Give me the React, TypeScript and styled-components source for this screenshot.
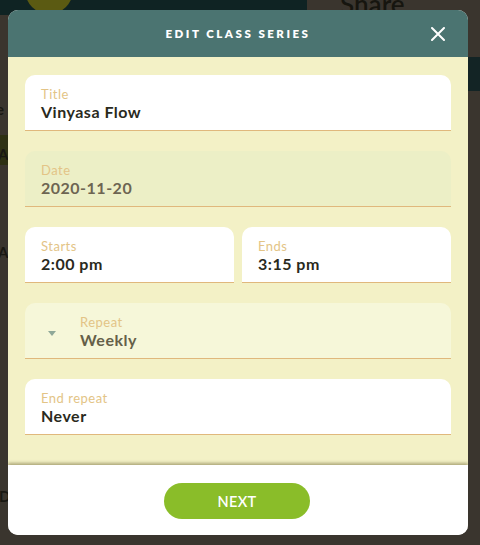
import React from "react";
import styled, { createGlobalStyle } from "styled-components";

const Global = createGlobalStyle`
  html, body { margin: 0; padding: 0; }
  body { width: 480px; height: 545px; overflow: hidden; font-family: "Lato", "Noto Sans", sans-serif; }
`;

const Page = styled.div`
  position: relative;
  width: 480px;
  height: 545px;
  background: #3a352e;
  overflow: hidden;
`;

const TopBar = styled.div`
  display: flex;
  height: 15px;
`;

const TopDark = styled.div`
  width: 307px;
  background: #0f2323;
  position: relative;
`;

const Avatar = styled.div`
  position: absolute;
  left: 25px;
  top: -34px;
  width: 48px;
  height: 48px;
  border-radius: 50%;
  background: #5b5a12;
`;

const ShareText = styled.div`
  position: absolute;
  left: 340px;
  top: -12px;
  font-size: 26px;
  font-weight: 600;
  color: #16150f;
  white-space: nowrap;
`;

const SideBlock = styled.div<{ $top: number; $h: number; $c: string; $left: number; $w: number }>`
  position: absolute;
  left: ${(p) => p.$left}px;
  top: ${(p) => p.$top}px;
  width: ${(p) => p.$w}px;
  height: ${(p) => p.$h}px;
  background: ${(p) => p.$c};
`;

const Modal = styled.div`
  position: absolute;
  left: 8px;
  top: 10px;
  width: 460px;
  border-radius: 10px;
  overflow: hidden;
  display: flex;
  flex-direction: column;
  background: #fff;
`;

const Header = styled.div`
  height: 47px;
  background: #4b7471;
  display: flex;
  align-items: center;
  justify-content: center;
  position: relative;
`;

const HeaderTitle = styled.h1`
  margin: 0;
  font-size: 11.5px;
  font-weight: 800;
  letter-spacing: 2.5px;
  color: #fff;
`;

const Close = styled.button`
  position: absolute;
  right: 22px;
  top: 16px;
  width: 16px;
  height: 16px;
  padding: 0;
  border: 0;
  background: none;
  display: flex;
  align-items: center;
  justify-content: center;
`;

const Body = styled.div`
  background: #f3f1c6;
  padding: 18px 17px 30px;
  display: flex;
  flex-direction: column;
  gap: 20px;
`;

const Row = styled.div`
  display: grid;
  grid-template-columns: 1fr 1fr;
  gap: 8px;
`;

const Field = styled.div<{ $bg?: string }>`
  flex: none;
  background: ${(p) => p.$bg || "#ffffff"};
  border-radius: 10px 10px 0 0;
  border-bottom: 1px solid #e0b87c;
  padding: 11px 16px 0;
  box-sizing: border-box;
  height: 56px;
  display: flex;
  align-items: flex-start;
`;

const FieldText = styled.div`
  display: flex;
  flex-direction: column;
`;

const Label = styled.div`
  font-size: 13px;
  line-height: 16px;
  letter-spacing: 0.5px;
  color: #e3c486;
`;

const Value = styled.div<{ $c?: string }>`
  font-size: 16px;
  line-height: 19px;
  font-weight: 700;
  color: ${(p) => p.$c || "#2a2a1d"};
  letter-spacing: 0.5px;
`;

const Arrow = styled.div`
  width: 0;
  height: 0;
  border-left: 4.5px solid transparent;
  border-right: 4.5px solid transparent;
  border-top: 5px solid #8fa898;
  margin: 17px 24px 0 7px;
`;

const Footer = styled.div`
  height: 70px;
  background: #fff;
  display: flex;
  align-items: center;
  justify-content: center;
  box-shadow: 0 -2px 3px rgba(90, 80, 30, 0.45);
  position: relative;
`;

const NextButton = styled.button`
  width: 146px;
  height: 36px;
  margin: 2px 0 0 -2px;
  border: 0;
  border-radius: 18px;
  background: #8abd29;
  color: #fff;
  font-family: "Lato", "Noto Sans", sans-serif;
  font-size: 14.5px;
  font-weight: 600;
  letter-spacing: 0.3px;
`;

const SideText = styled.div<{ $top: number; $left: number }>`
  position: absolute;
  top: ${(p) => p.$top}px;
  left: ${(p) => p.$left}px;
  font-size: 15px;
  font-weight: 700;
  color: #191812;
`;

export default function App() {
  return (
    <Page>
      <Global />
      <TopBar>
        <TopDark>
          <Avatar />
        </TopDark>
      </TopBar>
      <ShareText>Share</ShareText>
      <SideBlock $left={0} $top={135} $h={30} $w={8} $c="#2e3113" />
      <SideBlock $left={468} $top={57} $h={34} $w={12} $c="#132425" />
      <SideText $top={100} $left={-4}>e</SideText>
      <SideText $top={145} $left={-2}>A</SideText>
      <SideText $top={243} $left={-2}>A</SideText>
      <SideText $top={487} $left={-1}>D</SideText>
      <Modal>
        <Header>
          <HeaderTitle>EDIT CLASS SERIES</HeaderTitle>
          <Close aria-label="close">
            <svg width="14" height="14" viewBox="0 0 14 14">
              <path d="M1 1 L13 13 M13 1 L1 13" stroke="#fff" strokeWidth="2" strokeLinecap="round" />
            </svg>
          </Close>
        </Header>
        <Body>
          <Field>
            <FieldText>
              <Label>Title</Label>
              <Value>Vinyasa Flow</Value>
            </FieldText>
          </Field>
          <Field $bg="#ecefc6">
            <FieldText>
              <Label>Date</Label>
              <Value $c="#6d6552">2020-11-20</Value>
            </FieldText>
          </Field>
          <Row>
            <Field>
              <FieldText>
                <Label>Starts</Label>
                <Value>2:00 pm</Value>
              </FieldText>
            </Field>
            <Field>
              <FieldText>
                <Label>Ends</Label>
                <Value>3:15 pm</Value>
              </FieldText>
            </Field>
          </Row>
          <Field $bg="#f6f7d9">
            <Arrow />
            <FieldText>
              <Label>Repeat</Label>
              <Value $c="#656048">Weekly</Value>
            </FieldText>
          </Field>
          <Field>
            <FieldText>
              <Label>End repeat</Label>
              <Value>Never</Value>
            </FieldText>
          </Field>
        </Body>
        <Footer>
          <NextButton>NEXT</NextButton>
        </Footer>
      </Modal>
    </Page>
  );
}
